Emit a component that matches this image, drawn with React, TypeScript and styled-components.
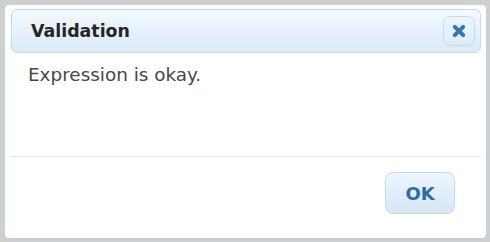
import { FC } from 'react';
import styled, { createGlobalStyle } from 'styled-components';

const GlobalStyle = createGlobalStyle`
  html, body {
    margin: 0;
    padding: 0;
    background: #cfcfcf;
  }
  body {
    width: 490px;
    height: 242px;
    overflow: hidden;
    font-family: 'DejaVu Sans', Verdana, sans-serif;
  }
  * {
    box-sizing: border-box;
  }
`;

const Dialog = styled.div`
  display: flex;
  flex-direction: column;
  margin: 4px 3px 3px 4px;
  height: 235px;
  padding: 4px 5px 0 6px;
  background: #fff;
  border: 1px solid #b9d4ec;
  border-radius: 5px;
`;

const TitleBar = styled.div`
  display: flex;
  align-items: center;
  justify-content: space-between;
  height: 44px;
  padding: 0 5px 0 19px;
  border: 1px solid #c5dbec;
  border-radius: 6px;
  background: linear-gradient(to bottom, #f4f9fd 0%, #e6f1fb 50%, #dbeaf8 100%);
`;

const Title = styled.span`
  font-size: 17.4px;
  font-weight: bold;
  color: #262626;
`;

const CloseButton = styled.button`
  display: flex;
  align-items: center;
  justify-content: center;
  width: 32px;
  height: 30px;
  padding: 0;
  border: 1px solid #c5dbec;
  border-radius: 7px;
  background: linear-gradient(to bottom, #edf5fc 0%, #dfedf9 100%);
  cursor: pointer;
`;

const Content = styled.div`
  height: 104px;
  padding: 11px 0 0 17px;
  font-size: 18.4px;
  line-height: 22px;
  color: #474747;
  border-bottom: 1px solid #e2e2e2;
`;

const ButtonPane = styled.div`
  display: flex;
  justify-content: flex-end;
  padding: 15px 26px 0 0;
`;

type ButtonProps = {
  wide?: boolean;
};

const Button = styled.button<ButtonProps>`
  width: ${({ wide }) => (wide ? '90px' : '70px')};
  height: 42px;
  border: 1px solid #c5dbec;
  border-radius: 8px;
  background: linear-gradient(to bottom, #eef6fd 0%, #e1eefa 50%, #d6e7f7 100%);
  font-family: 'DejaVu Sans', Verdana, sans-serif;
  font-size: 18px;
  font-weight: bold;
  color: #2e6e9e;
  cursor: pointer;
`;

const CloseIcon: FC = () => (
  <svg width="16" height="16" viewBox="0 0 16 16">
    <path
      d="M3.8 3.8 L12.2 12.2 M12.2 3.8 L3.8 12.2"
      stroke="#3677b0"
      strokeWidth="4"
      strokeLinecap="round"
      fill="none"
    />
  </svg>
);

const App: FC = () => (
  <>
    <GlobalStyle />
    <Dialog>
      <TitleBar>
        <Title>Validation</Title>
        <CloseButton aria-label="close">
          <CloseIcon />
        </CloseButton>
      </TitleBar>
      <Content>Expression is okay.</Content>
      <ButtonPane>
        <Button>OK</Button>
      </ButtonPane>
    </Dialog>
  </>
);

export default App;
